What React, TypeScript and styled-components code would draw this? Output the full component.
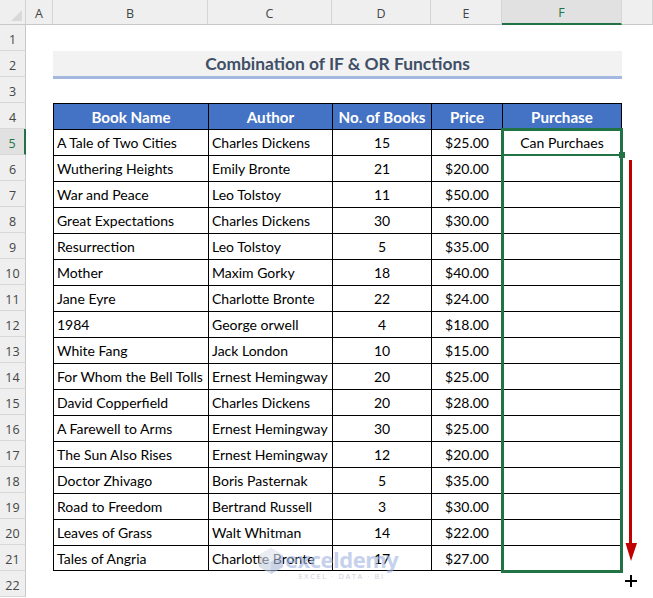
import React from "react";
import styled, { createGlobalStyle, css } from "styled-components";

const Global = createGlobalStyle`
  html, body { margin: 0; padding: 0; background: #ffffff; }
  body { width: 653px; height: 598px; overflow: hidden; }
`;

const books: [string, string, number, string][] = [
  ["A Tale of Two Cities", "Charles Dickens", 15, "$25.00"],
  ["Wuthering Heights", "Emily Bronte", 21, "$20.00"],
  ["War and Peace", "Leo Tolstoy", 11, "$50.00"],
  ["Great Expectations", "Charles Dickens", 30, "$30.00"],
  ["Resurrection", "Leo Tolstoy", 5, "$35.00"],
  ["Mother", "Maxim Gorky", 18, "$40.00"],
  ["Jane Eyre", "Charlotte Bronte", 22, "$24.00"],
  ["1984", "George orwell", 4, "$18.00"],
  ["White Fang", "Jack London", 10, "$15.00"],
  ["For Whom the Bell Tolls", "Ernest Hemingway", 20, "$25.00"],
  ["David Copperfield", "Charles Dickens", 20, "$28.00"],
  ["A Farewell to Arms", "Ernest Hemingway", 30, "$25.00"],
  ["The Sun Also Rises", "Ernest Hemingway", 12, "$20.00"],
  ["Doctor Zhivago", "Boris Pasternak", 5, "$35.00"],
  ["Road to Freedom", "Bertrand Russell", 3, "$30.00"],
  ["Leaves of Grass", "Walt Whitman", 14, "$22.00"],
  ["Tales of Angria", "Charlotte Bronte", 17, "$27.00"],
];

const GREEN = "#217346";

const Sheet = styled.div`
  position: relative;
  display: grid;
  grid-template-columns: 26px 27px 155px 124px 99px 71px 120px 1fr;
  grid-template-rows: 25px repeat(22, 26px);
  width: 653px;
  height: 598px;
  overflow: hidden;
  background: #ffffff;
  font-family: Lato, "Open Sans", sans-serif;
`;

const Corner = styled.div`
  position: relative;
  background: #efefef;
  border-right: 1px solid #d0d0d0;
  border-bottom: 1px solid #c8c8c8;
  box-sizing: border-box;
  &::after {
    content: "";
    position: absolute;
    left: 11px;
    top: 10px;
    width: 0;
    height: 0;
    border-left: 11px solid transparent;
    border-bottom: 11px solid #d9d9d9;
  }
`;

const ColHead = styled.div<{ $active?: boolean }>`
  display: flex;
  align-items: center;
  justify-content: center;
  box-sizing: border-box;
  background: ${(p) => (p.$active ? "#e1e1e1" : "#efefef")};
  border-right: 1px solid #d5d5d5;
  border-bottom: ${(p) => (p.$active ? `2px solid ${GREEN}` : "1px solid #c8c8c8")};
  color: ${(p) => (p.$active ? GREEN : "#444444")};
  font-family: "Open Sans", "Noto Sans", sans-serif;
  font-size: 12.5px;
  padding-top: 2px;
`;

const RowHead = styled.div<{ $active?: boolean }>`
  display: flex;
  align-items: center;
  justify-content: center;
  box-sizing: border-box;
  background: ${(p) => (p.$active ? "#e1e1e1" : "#efefef")};
  border-bottom: 1px solid #d8d8d8;
  border-right: ${(p) => (p.$active ? `2px solid ${GREEN}` : "1px solid #c8c8c8")};
  color: ${(p) => (p.$active ? GREEN : "#444444")};
  font-family: "Open Sans", "Noto Sans", sans-serif;
  font-size: 12.5px;
  padding-top: 3px;
`;

const Blank = styled.div``;

const Title = styled.div`
  grid-column: 3 / span 5;
  align-self: start;
  height: 28px;
  box-sizing: border-box;
  background: #f2f2f2;
  border-bottom: 3px solid #a3b7e0;
  display: flex;
  align-items: center;
  justify-content: center;
  color: #3f4f66;
  font-weight: 700;
  font-size: 17.4px;
  padding-bottom: 0px;
`;

const Cell = styled.div<{
  $align?: "left" | "center";
  $head?: boolean;
  $last?: boolean;
  $bottom?: boolean;
}>`
  display: flex;
  align-items: center;
  justify-content: ${(p) => (p.$align === "center" ? "center" : "flex-start")};
  box-sizing: border-box;
  padding: 0 0 0 ${(p) => (p.$align === "center" ? "0" : "3px")};
  border-top: 1px solid #000;
  border-left: 1px solid #000;
  ${(p) => p.$last && css`border-right: 1px solid #000;`}
  ${(p) => p.$bottom && css`border-bottom: 1px solid #000;`}
  font-size: 14px;
  color: #000;
  white-space: nowrap;
  overflow: hidden;
  ${(p) =>
    p.$head &&
    css`
      background: #4472c4;
      color: #ffffff;
      font-weight: 700;
      font-size: 15.2px;
      justify-content: center;
      padding-left: 0;
    `}
`;

const SelectionBox = styled.div`
  position: absolute;
  left: 501px;
  top: 128px;
  width: 122px;
  height: 445px;
  box-sizing: border-box;
  border: 3px solid ${GREEN};
  pointer-events: none;
`;

const ActiveLine = styled.div`
  position: absolute;
  left: 501px;
  top: 154px;
  width: 122px;
  height: 2px;
  background: ${GREEN};
`;

const FillHandle = styled.div`
  position: absolute;
  left: 619px;
  top: 152px;
  width: 6px;
  height: 6px;
  background: ${GREEN};
`;

const Overlay = styled.svg`
  position: absolute;
  pointer-events: none;
`;

const Watermark = styled.div`
  position: absolute;
  left: 258px;
  top: 547px;
  display: flex;
  align-items: flex-start;
  gap: 1px;
  opacity: 0.6;
  pointer-events: none;
`;

const WmText = styled.div`
  display: flex;
  flex-direction: column;
  align-items: center;
`;

const WmName = styled.span`
  font-family: "Open Sans", sans-serif;
  font-weight: 700;
  font-size: 22px;
  line-height: 25px;
  color: #9fb4e2;
  letter-spacing: -0.5px;
`;

const WmTag = styled.span`
  font-family: "Open Sans", sans-serif;
  font-size: 7.5px;
  line-height: 9px;
  letter-spacing: 1.6px;
  color: #aab1bf;
`;

const cols = ["A", "B", "C", "D", "E", "F", ""];

export default function App() {
  const rows: React.ReactNode[] = [];
  for (let r = 1; r <= 22; r++) {
    rows.push(
      <RowHead key={`rh${r}`} $active={r === 5}>
        {r}
      </RowHead>
    );
    rows.push(<Blank key={`a${r}`} />);
    if (r === 2) {
      rows.push(<Title key="title">Combination of IF &amp; OR Functions</Title>);
      rows.push(<Blank key="g2" />);
    } else if (r === 4) {
      ["Book Name", "Author", "No. of Books", "Price", "Purchase"].forEach((h, i) =>
        rows.push(
          <Cell key={`h${i}`} $head $last={i === 4}>
            {h}
          </Cell>
        )
      );
      rows.push(<Blank key="g4" />);
    } else if (r >= 5 && r <= 21) {
      const b = books[r - 5];
      const bottom = r === 21;
      rows.push(<Cell key={`b${r}`} $bottom={bottom}>{b[0]}</Cell>);
      rows.push(<Cell key={`c${r}`} $bottom={bottom}>{b[1]}</Cell>);
      rows.push(
        <Cell key={`d${r}`} $align="center" $bottom={bottom}>
          {b[2]}
        </Cell>
      );
      rows.push(
        <Cell key={`e${r}`} $align="center" $bottom={bottom}>
          {b[3]}
        </Cell>
      );
      rows.push(
        <Cell key={`f${r}`} $align="center" $last $bottom={bottom}>
          {r === 5 ? "Can Purchaes" : ""}
        </Cell>
      );
      rows.push(<Blank key={`g${r}`} />);
    } else {
      for (let c = 0; c < 6; c++) rows.push(<Blank key={`x${r}-${c}`} />);
    }
  }

  return (
    <>
      <Global />
      <Sheet>
        <Corner />
        {cols.map((c, i) => (
          <ColHead key={`ch${i}`} $active={c === "F"}>
            {c}
          </ColHead>
        ))}
        {rows}

        <SelectionBox />
        <ActiveLine />
        <FillHandle />

        <Overlay
          style={{ left: 623, top: 158, width: 16, height: 406 }}
          viewBox="0 0 16 406"
        >
          <rect x="6" y="2" width="3" height="386" fill="#c00000" />
          <polygon points="2.5,385 14,385 8,403" fill="#c00000" />
        </Overlay>

        <Overlay style={{ left: 624, top: 574, width: 14, height: 14 }} viewBox="0 0 14 14">
          <rect x="1" y="6" width="12" height="2" fill="#000" />
          <rect x="6" y="1" width="2" height="12" fill="#000" />
        </Overlay>

        <Watermark>
          <svg width="26" height="28" viewBox="0 0 26 28">
            <polygon points="13,1 25,8 25,20 13,27 1,20 1,8" fill="#c4cedf" />
            <polygon points="13,1 25,8 13,15 1,8" fill="#dde3ee" />
            <polygon points="13,15 25,8 25,20 13,27" fill="#a9b9d8" />
          </svg>
          <WmText>
            <WmName>exceldemy</WmName>
            <WmTag>EXCEL · DATA · BI</WmTag>
          </WmText>
        </Watermark>
      </Sheet>
    </>
  );
}
